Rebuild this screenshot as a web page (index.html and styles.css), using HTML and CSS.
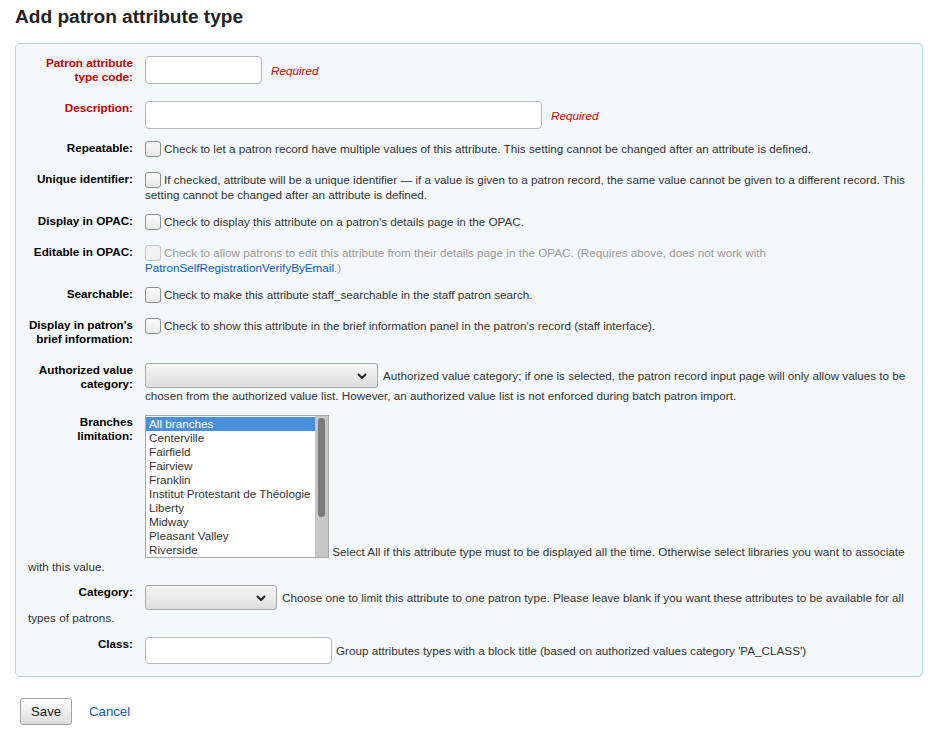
FILE: index.html
```html
<!DOCTYPE html>
<html lang="en">
<head>
<meta charset="utf-8">
<title>Add patron attribute type</title>
<link rel="stylesheet" href="styles.css">
</head>
<body>
<div class="page">
  <h1 class="title">Add patron attribute type</h1>
  <form>
    <fieldset class="rows">
      <ol class="fields">
        <li class="row">
          <label class="lbl lbl-req" for="code">Patron attribute type code:</label><input class="text w-code" id="code" type="text"><span class="required">Required</span>
        </li>
        <li class="row">
          <label class="lbl lbl-req" for="desc">Description:</label><input class="text w-desc" id="desc" type="text"><span class="required">Required</span>
        </li>
        <li class="row">
          <label class="lbl" for="rep">Repeatable:</label><input class="check" id="rep" type="checkbox">Check to let a patron record have multiple values of this attribute. This setting cannot be changed after an attribute is defined.
        </li>
        <li class="row">
          <label class="lbl" for="uniq">Unique identifier:</label><input class="check" id="uniq" type="checkbox">If checked, attribute will be a unique identifier — if a value is given to a patron record, the same value cannot be given to a different record. This setting cannot be changed after an attribute is defined.
        </li>
        <li class="row">
          <label class="lbl" for="opac">Display in OPAC:</label><input class="check" id="opac" type="checkbox">Check to display this attribute on a patron's details page in the OPAC.
        </li>
        <li class="row">
          <label class="lbl" for="edit">Editable in OPAC:</label><input class="check" id="edit" type="checkbox" disabled><span class="disabled">Check to allow patrons to edit this attribute from their details page in the OPAC. (Requires above, does not work with <a class="link" href="#">PatronSelfRegistrationVerifyByEmail</a>.)</span>
        </li>
        <li class="row">
          <label class="lbl" for="search">Searchable:</label><input class="check" id="search" type="checkbox">Check to make this attribute staff_searchable in the staff patron search.
        </li>
        <li class="row">
          <label class="lbl" for="brief">Display in patron's brief information:</label><input class="check" id="brief" type="checkbox">Check to show this attribute in the brief information panel in the patron's record (staff interface).
        </li>
        <li class="row">
          <label class="lbl" for="av">Authorized value category:</label><span class="select w-av"><select id="av"><option value=""></option></select><svg class="chev" width="10" height="6" viewBox="0 0 10 6"><path d="M1 1 L5 5 L9 1" fill="none" stroke="#222" stroke-width="2"/></svg></span><span class="after-select">Authorized value category; if one is selected, the patron record input page will only allow values to be chosen from the authorized value list. However, an authorized value list is not enforced during batch patron import.</span>
        </li>
        <li class="row row-list">
          <label class="lbl" for="branches">Branches limitation:</label><div class="listbox" id="branches" role="listbox"><div class="listbox-inner"><div class="opts"><div class="opt selected">All branches</div><div class="opt">Centerville</div><div class="opt">Fairfield</div><div class="opt">Fairview</div><div class="opt">Franklin</div><div class="opt">Institut Protestant de Théologie</div><div class="opt">Liberty</div><div class="opt">Midway</div><div class="opt">Pleasant Valley</div><div class="opt">Riverside</div><div class="opt">Springfield</div><div class="opt">Troy</div><div class="opt">Union</div></div><div class="track"><div class="thumb"></div></div></div></div> Select All if this attribute type must to be displayed all the time. Otherwise select libraries you want to associate with this value.
        </li>
        <li class="row">
          <label class="lbl" for="cat">Category:</label><span class="select w-cat"><select id="cat"><option value=""></option></select><svg class="chev" width="10" height="6" viewBox="0 0 10 6"><path d="M1 1 L5 5 L9 1" fill="none" stroke="#222" stroke-width="2"/></svg></span><span class="after-select">Choose one to limit this attribute to one patron type. Please leave blank if you want these attributes to be available for all types of patrons.</span>
        </li>
        <li class="row">
          <label class="lbl" for="cls">Class:</label><input class="text w-class" id="cls" type="text"><span class="after-input">Group attributes types with a block title (based on authorized values category 'PA_CLASS')</span>
        </li>
      </ol>
    </fieldset>
    <div class="action">
      <button class="btn" type="button">Save</button><a class="link cancel" href="#">Cancel</a>
    </div>
  </form>
</div>
</body>
</html>
```

FILE: styles.css
```css
body {
  margin: 0;
  background: #ffffff;
  color: #333333;
  font-family: "Liberation Sans", Arial, sans-serif;
  font-size: 13.2px;
}

.page {
  padding: 6px 15px 0;
}

.title {
  margin: 0 0 15px;
  font-size: 19.1px;
  line-height: 22px;
  font-weight: bold;
  color: #222222;
}

.rows {
  margin: 0;
  min-width: 0;
  padding: 12px 11px 0 12px;
  border: 1px solid #b9d8d9;
  border-radius: 5px;
  background: #f4f8f9;
  font-size: 11.7px;
}

.fields {
  list-style: none;
  margin: 0;
  padding: 0;
}

.row {
  display: flow-root;
  padding-bottom: 12px;
  line-height: 15px;
  color: #333333;
}

.row-list {
  padding-bottom: 11px;
}

.lbl {
  float: left;
  width: 105px;
  margin-right: 12px;
  padding-bottom: 5px;
  text-align: right;
  font-weight: bold;
  line-height: 14px;
  color: #000000;
}

.lbl-req {
  color: #cc0000;
}

.required {
  margin-left: 9px;
  color: #dd0000;
  font-style: italic;
}

.text {
  box-sizing: border-box;
  height: 28px;
  margin: 0;
  padding: 2px 4px;
  border: 1px solid #b8b8b8;
  border-radius: 4px;
  background: #ffffff;
  font-family: inherit;
  font-size: inherit;
  vertical-align: baseline;
}

.w-code { width: 117px; }
.w-desc { width: 397px; }
.w-class { width: 187px; height: 27px; }

.after-input {
  margin-left: 4px;
}

.check {
  appearance: none;
  -webkit-appearance: none;
  box-sizing: border-box;
  width: 16px;
  height: 16px;
  margin: 0 3px -2px 0;
  border: 1px solid #8f8f8f;
  border-radius: 3px;
  background: linear-gradient(#fbfbfb, #e8e8e8);
  vertical-align: top;
}

.check:disabled {
  border-color: #c8c8c8;
  background: #f1f1f1;
}

.disabled {
  color: #9a9a9a;
}

.link {
  color: #1060bd;
  text-decoration: none;
}

.select {
  position: relative;
  display: inline-block;
  vertical-align: baseline;
}

.select select {
  appearance: none;
  -webkit-appearance: none;
  box-sizing: border-box;
  display: block;
  width: 100%;
  height: 25px;
  margin: 0;
  padding: 0 24px 0 6px;
  border: 1px solid #a9a9a9;
  border-radius: 3px;
  background: linear-gradient(#f6f6f6, #dedede);
  font-family: inherit;
  font-size: inherit;
  color: #333333;
}

.w-av { width: 233px; }
.w-cat { width: 132px; }

.chev {
  position: absolute;
  right: 11px;
  top: 10px;
  pointer-events: none;
}

.after-select {
  margin-left: 5px;
}

.listbox {
  box-sizing: border-box;
  display: inline-block;
  width: 184px;
  height: 143px;
  margin-bottom: -2px;
  border: 1px solid #a9a9a9;
  background: #ffffff;
  overflow: hidden;
  vertical-align: baseline;
  line-height: 14px;
  color: #333333;
}

.listbox-inner {
  display: flex;
  height: 100%;
}

.opts {
  flex: 1;
  min-width: 0;
  padding-top: 1px;
  overflow: hidden;
}

.opt {
  height: 14px;
  padding: 0 3px;
  white-space: nowrap;
}

.opt.selected {
  background: #4a8fd9;
  color: #ffffff;
}

.track {
  box-sizing: border-box;
  width: 13px;
  padding: 2px 3px 0;
  background: #c6c6c6;
}

.thumb {
  width: 7px;
  height: 99px;
  border-radius: 4px;
  background: #7a7a7a;
}

.action {
  padding: 21px 0 0 5px;
}

.btn {
  box-sizing: border-box;
  height: 27px;
  padding: 0 10px;
  border: 1px solid #a3a3a3;
  border-radius: 3px;
  background: linear-gradient(#ffffff, #dcdcdc);
  font-family: inherit;
  font-size: 13.2px;
  color: #222222;
  vertical-align: middle;
}

.cancel {
  margin-left: 17px;
  font-size: 13.2px;
  vertical-align: middle;
}
```
